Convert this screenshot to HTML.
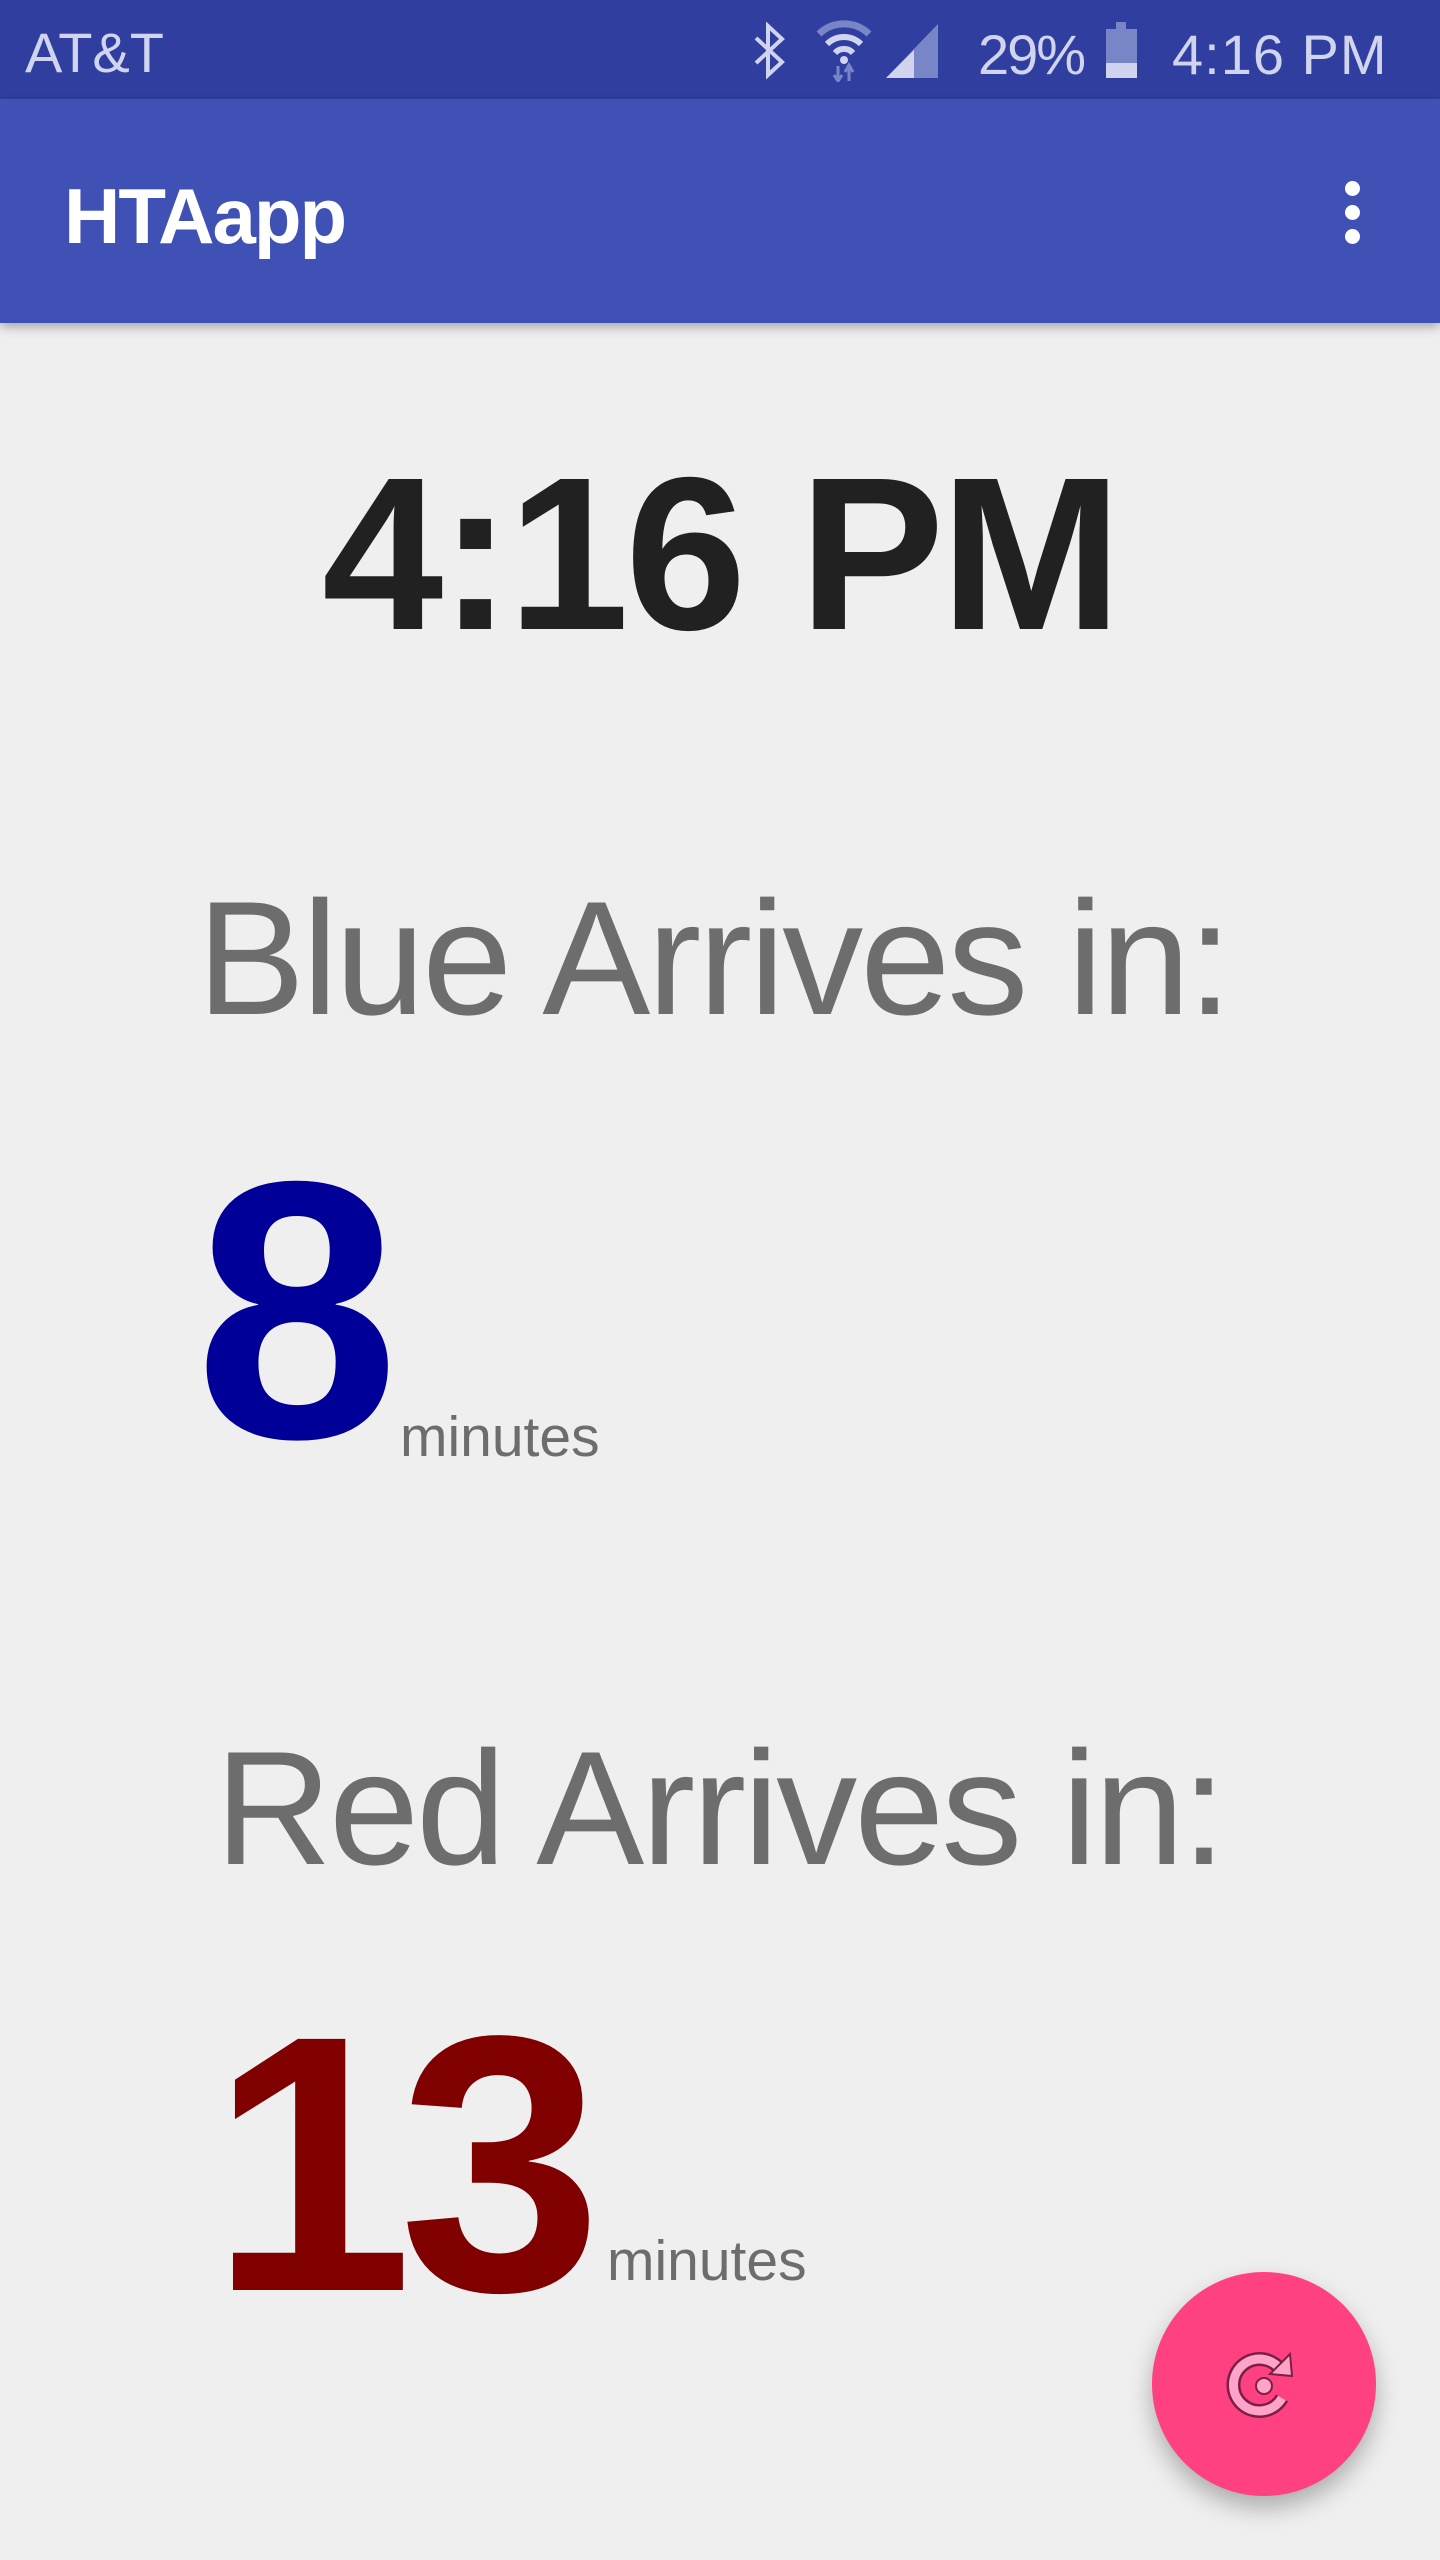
<!DOCTYPE html>
<html><head><meta charset="utf-8"><style>
*{margin:0;padding:0}
body{width:1440px;height:2560px;background:#efefef;position:relative;overflow:hidden;font-family:"Liberation Sans",sans-serif}
.t{position:absolute;line-height:1;white-space:nowrap}
#sb{position:absolute;left:0;top:0;width:1440px;height:99px;background:#303f9f}
#ab{position:absolute;left:0;top:99px;width:1440px;height:224px;background:#3f51b5;box-shadow:0 4px 10px rgba(0,0,0,.3)}
.dot{position:absolute;width:15px;height:15px;border-radius:50%;background:#fff;left:1345px}
#fab{position:absolute;left:1152px;top:2272px;width:224px;height:224px;border-radius:50%;background:#ff4081;box-shadow:0 12px 24px rgba(0,0,0,.28)}
</style></head><body>
<div id="sb"></div>
<div class="t" style="left:25px;top:25px;font-size:56px;color:#d0d4ee;">AT&amp;T</div>
<svg style="position:absolute;left:750px;top:22px" width="40" height="58" viewBox="0 0 40 58"><path d="M6 16 L32 40 L18 53 L18 4 L32 17 L6 41" fill="none" stroke="#d0d4ee" stroke-width="4"/></svg>
<svg style="position:absolute;left:815px;top:20px" width="60" height="62" viewBox="0 0 60 62"><path d="M4 14 A36 36 0 0 1 54 14" fill="none" stroke="#7886c8" stroke-width="7"/><path d="M12 24 A24 24 0 0 1 46 24" fill="none" stroke="#d0d4ee" stroke-width="6"/><path d="M20 33 A12 12 0 0 1 38 33" fill="none" stroke="#d0d4ee" stroke-width="6"/><circle cx="29" cy="40" r="4" fill="#d0d4ee"/><path d="M23 46 V60 M19 55 L23 61 L27 55 M34 61 V47 M30 52 L34 45 L38 52" stroke="#7886c8" stroke-width="3" fill="none"/></svg>
<svg style="position:absolute;left:886px;top:24px" width="54" height="54" viewBox="0 0 54 54"><path d="M0 54 L52 0 V54 Z" fill="#7886c8"/><path d="M0 54 L28 26 V54 Z" fill="#d0d4ee"/></svg>
<div class="t" style="left:978px;top:27px;font-size:56px;color:#d0d4ee;letter-spacing:-2px">29%</div>
<div style="position:absolute;left:1116px;top:22px;width:10px;height:8px;background:#7886c8"></div>
<div style="position:absolute;left:1106px;top:29px;width:31px;height:49px;background:#7886c8"></div>
<div style="position:absolute;left:1106px;top:63px;width:31px;height:15px;background:#d0d4ee"></div>
<div class="t" style="left:1172px;top:27px;font-size:56px;color:#d0d4ee;letter-spacing:1px">4:16 PM</div>
<div id="ab"></div>
<div class="t" style="left:64px;top:177px;font-size:78px;color:#fff;font-weight:bold;letter-spacing:-2px">HTAapp</div>
<div class="dot" style="top:181px"></div><div class="dot" style="top:205px"></div><div class="dot" style="top:229px"></div>
<div class="t" style="left:0;width:1440px;text-align:center;top:446px;font-size:218px;font-weight:bold;color:#212121;letter-spacing:-4px">4:16 PM</div>
<div class="t" style="left:197px;top:878px;font-size:162px;color:#6d6d6d;letter-spacing:-3px">Blue Arrives in:</div>
<div class="t" style="left:195px;top:1127px;font-size:367px;font-weight:bold;color:#000099">8</div>
<div class="t" style="left:400px;top:1409px;font-size:57px;color:#6d6d6d">minutes</div>
<div class="t" style="left:215px;top:1728px;font-size:162px;color:#6d6d6d;letter-spacing:-3px">Red Arrives in:</div>
<div class="t" style="left:210px;top:1982px;font-size:365px;font-weight:bold;color:#800000;letter-spacing:-14px">13</div>
<div class="t" style="left:607px;top:2233px;font-size:57px;color:#6d6d6d">minutes</div>
<div id="fab"></div>
<svg style="position:absolute;left:1226px;top:2346px" width="76" height="76" viewBox="0 0 76 76"><path d="M56 26 A26 26 0 1 0 56 52" fill="none" stroke="#7a1f45" stroke-width="14"/><path d="M56 26 A26 26 0 1 0 56 52" fill="none" stroke="#ffa3c8" stroke-width="9"/><path d="M44 28 L64 8 L66 30 Z" fill="#ffa3c8" stroke="#7a1f45" stroke-width="2"/><circle cx="38" cy="40" r="8" fill="#ffa3c8" stroke="#7a1f45" stroke-width="2"/></svg>
</body></html>
